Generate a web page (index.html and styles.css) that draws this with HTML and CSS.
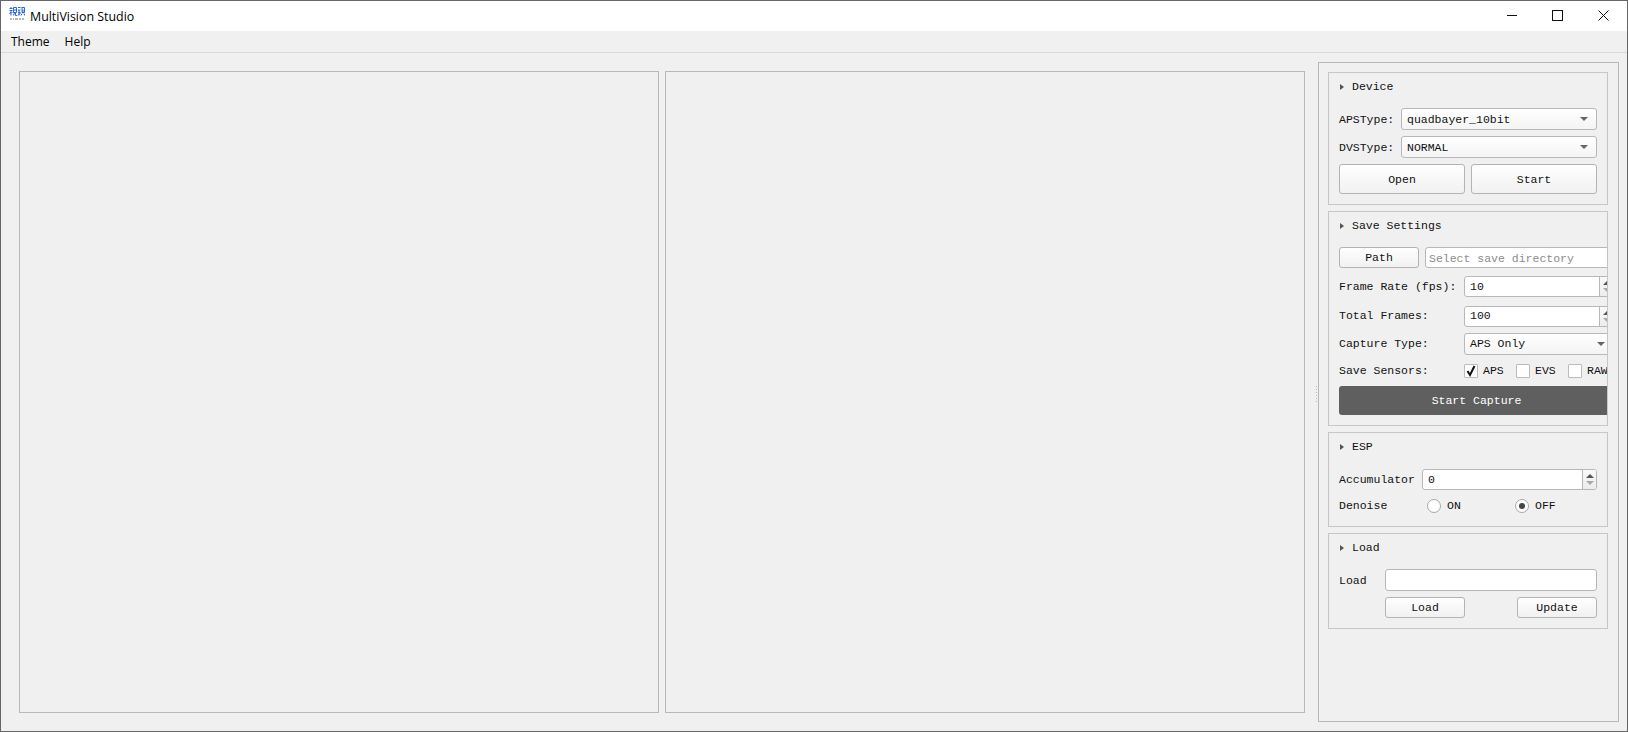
FILE: index.html
```html
<!DOCTYPE html>
<html lang="en">
<head>
<meta charset="utf-8">
<title>MultiVision Studio</title>
<link rel="stylesheet" href="styles.css">
</head>
<body>
<div class="window">
  <header class="titlebar">
    <svg class="logo" width="16" height="15" viewBox="0 0 16 15" aria-hidden="true">
      <g fill="none" stroke="#2a62e0" stroke-width="1">
        <path d="M.5 1.500h3M2 0v1.500M.5 3.500h3M2 3.500v5M.5 7l1.500-2M2.500 5l1 1M4.500.5h3v5h-3zM4.500 3h3M5.500 5.500l-1 3M6.500 5.500v3h1.500"/>
        <path d="M9 .5h2.500M9 3h2.500M10 3v2.500M9 5.500h2.500M10 5.500v3M11.500 6l-2.500 2.500M12.500.5h3M13 .5v5h2.500v-5M14 2.500v3M13 6.500l-1 2M15 6.500l.7 2"/>
      </g>
      <path d="M1 12h2M4 12h1M6 12h3M10 12h2M13 12h2" stroke="#b4b4b4" stroke-width="2" fill="none"/>
    </svg>
    <span class="app-title">MultiVision Studio</span>
    <div class="winctl">
      <svg width="46" height="30" viewBox="0 0 46 30" aria-hidden="true"><path d="M18 14.500h10" stroke="#111" fill="none"/></svg>
      <svg width="46" height="30" viewBox="0 0 46 30" aria-hidden="true"><rect x="17.500" y="9.500" width="10" height="10" stroke="#111" fill="none"/></svg>
      <svg width="46" height="30" viewBox="0 0 46 30" aria-hidden="true"><path d="M17.500 9.500l10 10M27.500 9.500l-10 10" stroke="#111" fill="none"/></svg>
    </div>
  </header>
  <nav class="menubar">
    <span class="menu-item">Theme</span>
    <span class="menu-item">Help</span>
  </nav>
  <main class="workspace">
    <section class="views">
      <div class="view"></div>
      <div class="view"></div>
    </section>
    <div class="splitter"><span class="grip"></span></div>
    <aside class="sidebar">

      <section class="group group-device">
        <div class="group-head"><i class="caret"></i>Device</div>
        <div class="rows">
          <div class="row"><span class="lbl lbl-device">APSType:</span><div class="field combo">quadbayer_10bit<i class="down"></i></div></div>
          <div class="row"><span class="lbl lbl-device">DVSType:</span><div class="field combo">NORMAL<i class="down"></i></div></div>
          <div class="row pair">
            <button class="btn btn-tall">Open</button>
            <button class="btn btn-tall">Start</button>
          </div>
        </div>
      </section>

      <section class="group group-save">
        <div class="group-head"><i class="caret"></i>Save Settings</div>
        <div class="rows rows-wide">
          <div class="row row-path"><button class="btn btn-path">Path</button><div class="field placeholder">Select save directory</div></div>
          <div class="row row-spin row-frame"><span class="lbl lbl-save">Frame Rate (fps):</span><div class="field spin">10<span class="stepper"><i class="up"></i><i class="dn"></i></span></div></div>
          <div class="row row-spin row-total"><span class="lbl lbl-save">Total Frames:</span><div class="field spin">100<span class="stepper"><i class="up"></i><i class="dn"></i></span></div></div>
          <div class="row row-capture"><span class="lbl lbl-save">Capture Type:</span><div class="field combo">APS Only<i class="down"></i></div></div>
          <div class="row row-check"><span class="lbl lbl-save">Save Sensors:</span>
            <div class="checks">
              <span class="check"><i class="box"><svg width="12" height="12" viewBox="0 0 12 12" aria-hidden="true"><path d="M2.500 6l2.500 4 4.500-9" stroke="#111" stroke-width="2" fill="none"/></svg></i>APS</span>
              <span class="check"><i class="box"></i>EVS</span>
              <span class="check"><i class="box"></i>RAW</span>
            </div>
          </div>
          <button class="btn-dark">Start Capture</button>
        </div>
      </section>

      <section class="group group-esp">
        <div class="group-head"><i class="caret"></i>ESP</div>
        <div class="rows">
          <div class="row row-accum"><span class="lbl lbl-esp">Accumulator</span><div class="field spin">0<span class="stepper stepper-full"><i class="up"></i><i class="dn"></i></span></div></div>
          <div class="row row-radio"><span class="lbl lbl-radio">Denoise</span>
            <span class="radio"><i class="dot"></i>ON</span>
            <span class="radio"><i class="dot dot-on"></i>OFF</span>
          </div>
        </div>
      </section>

      <section class="group group-load">
        <div class="group-head"><i class="caret"></i>Load</div>
        <div class="rows">
          <div class="row"><span class="lbl lbl-load">Load</span><div class="field"></div></div>
          <div class="row row-actions">
            <button class="btn btn-small">Load</button>
            <button class="btn btn-small">Update</button>
          </div>
        </div>
      </section>

    </aside>
  </main>
</div>
</body>
</html>
```
FILE: styles.css
```css
* { box-sizing: border-box; }
html, body { margin: 0; height: 100%; }
body { background: #f0f0f0; overflow: hidden; }
i { display: block; font-style: normal; }

.window {
  width: 1628px; height: 732px;
  border: 1px solid #666;
  display: flex; flex-direction: column;
  background: #f0f0f0; color: #111;
  font: 11.5px/1 "Liberation Mono", monospace;
}

.titlebar {
  height: 30px; background: #fff;
  display: flex; align-items: center;
  padding-left: 8px; flex: none;
}
.logo { align-self: flex-start; margin-top: 6px; }
.app-title { font: 12.4px "Open Sans", sans-serif; margin-left: 5px; color: #000; }
.winctl { margin-left: auto; display: flex; }
.winctl svg { display: block; }

.menubar {
  height: 22px; flex: none;
  border-bottom: 1px solid #d9d9d9;
  display: flex; align-items: center; padding-left: 10px; gap: 15px;
  font: 12px "Open Sans", sans-serif; color: #000;
}

.workspace { flex: 1; display: flex; min-height: 0; }
.views { display: flex; gap: 6px; padding: 18px 0 18px 18px; }
.view { width: 640px; border: 1px solid #b9b9b9; }
.splitter { width: 13px; display: flex; align-items: center; justify-content: flex-end; padding-right: 1px; padding-top: 4px; }
.grip { width: 1px; height: 16px; background: repeating-linear-gradient(#bdbdbd 0 1px, transparent 1px 3px); }

.sidebar {
  width: 301px; margin: 9px 8px 9px 0;
  border: 1px solid #b9b9b9;
  padding: 9px 10px 0 9px;
  display: flex; flex-direction: column;
}
.group { border: 1px solid #c6c6c6; overflow: hidden; padding: 0 10px; flex: none; }
.group-device { height: 133px; margin-bottom: 6px; }
.group-save { height: 215px; margin-bottom: 6px; }
.group-esp { height: 95px; margin-bottom: 6px; }
.group-load { height: 96px; }

.group-head { height: 35px; display: flex; align-items: center; padding-bottom: 8px; }
.group-esp .group-head { height: 36px; padding-bottom: 9px; }
.caret {
  width: 0; height: 0; margin: 0 8px 0 1px;
  border-left: 4px solid #555; border-top: 3.500px solid transparent; border-bottom: 3.500px solid transparent;
}

.rows { display: flex; flex-direction: column; gap: 6px; }
.rows-wide { width: 275px; gap: 0; }
.row { display: flex; align-items: center; height: 22px; flex: none; }
.pair { gap: 6px; height: 30px; }
.lbl { flex: none; white-space: nowrap; }
.lbl-device { width: 62px; }
.lbl-save { width: 125px; }
.lbl-esp { width: 83px; }
.lbl-radio { width: 88px; }
.lbl-load { width: 46px; }

.field {
  flex: 1; height: 22px; min-width: 0;
  background: #fff; border: 1px solid #b8b8b8; border-radius: 3px;
  display: flex; align-items: center; padding-left: 5px;
  position: relative; white-space: nowrap;
}
.combo { background: linear-gradient(#fff, #f4f4f4); }
.placeholder { margin-left: 6px; color: #8c8c8c; padding-left: 3px; padding-top: 2px; height: 21px; }
.group-device .field, .group-device .lbl, .lbl-load { padding-top: 2px; }
.row-total .lbl, .row-total .field { padding-bottom: 2px; }
.down {
  position: absolute; right: 8px; top: 8px; width: 0; height: 0;
  border-top: 4px solid #666; border-left: 4px solid transparent; border-right: 4px solid transparent;
}
.stepper {
  position: absolute; right: 0; top: 0; bottom: 0; width: 14px;
  border-left: 1px solid #b8b8b8;
  display: flex; flex-direction: column; align-items: center; justify-content: center; gap: 3px;
  background: linear-gradient(#fafafa, #ececec); border-radius: 0 2px 2px 0;
}
.up { width: 0; height: 0; border-bottom: 4px solid #555; border-left: 4px solid transparent; border-right: 4px solid transparent; }
.dn { width: 0; height: 0; border-top: 4px solid #a8a8a8; border-left: 4px solid transparent; border-right: 4px solid transparent; }

.btn, .btn-dark { font: inherit; padding: 0; cursor: default; border-radius: 3px; display: block; }
.btn {
  color: #111; border: 1px solid #b4b4b4;
  background: linear-gradient(#fefefe, #f1f1f1);
}
.btn-tall { flex: 1; height: 30px; padding-top: 2px; }
.btn-path { width: 80px; height: 21px; flex: none; }
.btn-small { width: 80px; height: 21px; }
.btn-dark {
  width: 100%; height: 29px; margin-top: 6px;
  background: #5f5f5f; border: 0; color: #fff;
}

.row-path { height: 21px; }
.row-spin { height: 21px; }
.row-spin .field, .row-accum .field { height: 21px; }
.row-frame { margin-top: 8px; }
.row-total { margin-top: 9px; }
.row-capture { margin-top: 6px; }
.row-check { margin-top: 7px; height: 18px; }
.checks { display: grid; grid-template-columns: repeat(3, 52px); }
.check { display: flex; align-items: center; gap: 5px; }
.box {
  width: 14px; height: 14px; background: #fff; border: 1px solid #bcbcbc; border-radius: 1px;
  display: flex; align-items: center; justify-content: center;
}
.box svg { display: block; }

.row-accum { height: 21px; }
.row-radio { height: 20px; }
.radio { width: 88px; display: flex; align-items: center; gap: 6px; flex: none; }
.dot { width: 14px; height: 14px; border-radius: 50%; background: #fff; border: 1px solid #a8a8a8; position: relative; }
.dot-on::after {
  content: ""; position: absolute; left: 3px; top: 3px; width: 6px; height: 6px; border-radius: 50%; background: #444;
}

.row-actions { justify-content: space-between; padding-left: 46px; height: 21px; }
```
